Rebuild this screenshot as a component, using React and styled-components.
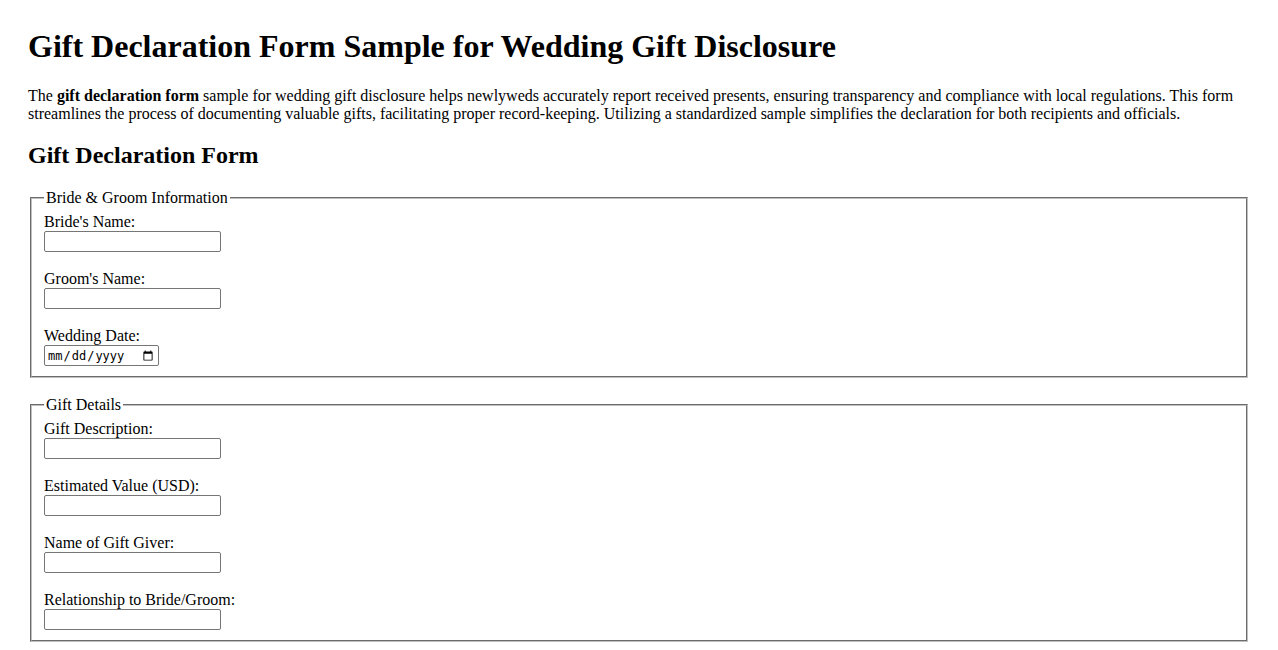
import React from "react";
import styled, { createGlobalStyle } from "styled-components";

const GlobalStyle = createGlobalStyle`
  html, body {
    margin: 0;
    padding: 0;
    background: #ffffff;
  }
  body {
    font-family: "Liberation Serif", "Times New Roman", serif;
    font-size: 16px;
    color: #000000;
  }
`;

const Page = styled.main`
  padding: 28px;
`;

const Title = styled.h1`
  font-size: 32px;
  font-weight: bold;
  line-height: 37px;
  margin: 0 0 21px;
`;

const Intro = styled.p`
  margin: 0 0 16px;
  padding-top: 1px;
  line-height: 18px;
`;

const SectionTitle = styled.h2`
  font-size: 24px;
  font-weight: bold;
  line-height: 27px;
  margin: 19px 0 19px;
`;

const Form = styled.form`
  display: flex;
  flex-direction: column;
  gap: 17px;
`;

const Fieldset = styled.fieldset`
  margin: 0 2px;
  padding: 5px 12px 10px;
  border: 2px groove rgb(192, 192, 192);
  min-width: min-content;
  display: flex;
  flex-direction: column;
  gap: 17px;
`;

const Legend = styled.legend`
  padding: 1px 2px 0;
  line-height: 18px;
  font-size: 16px;
`;

const Field = styled.div`
  display: flex;
  flex-direction: column;
  align-items: flex-start;
`;

const Label = styled.label`
  line-height: 18px;
  font-size: 16px;
  padding-top: 1px;
`;

const Input = styled.input`
  box-sizing: border-box;
  width: ${(p) => (p.type === "date" ? "115px" : "177px")};
  height: 21px;
  margin: 0;
  padding: 1px 2px;
  border: 1px solid #767676;
  border-radius: 2px;
  background: #ffffff;
  font-family: ${(p) =>
    p.type === "date"
      ? `"DejaVu Sans Mono", "Liberation Mono", monospace`
      : `"Liberation Sans", Arial, sans-serif`};
  font-size: ${(p) => (p.type === "date" ? "12px" : "13.33px")};
  color: #000000;
`;

const sections = [
  {
    legend: "Bride & Groom Information",
    fields: [
      { id: "bride", label: "Bride's Name:", type: "text" },
      { id: "groom", label: "Groom's Name:", type: "text" },
      { id: "date", label: "Wedding Date:", type: "date" },
    ],
  },
  {
    legend: "Gift Details",
    fields: [
      { id: "desc", label: "Gift Description:", type: "text" },
      { id: "value", label: "Estimated Value (USD):", type: "text" },
      { id: "giver", label: "Name of Gift Giver:", type: "text" },
      { id: "relation", label: "Relationship to Bride/Groom:", type: "text" },
    ],
  },
];

export default function App() {
  return (
    <>
      <GlobalStyle />
      <Page>
        <Title>Gift Declaration Form Sample for Wedding Gift Disclosure</Title>
        <Intro>
          The <strong>gift declaration form</strong> sample for wedding gift
          disclosure helps newlyweds accurately report received presents,
          ensuring transparency and compliance with local regulations. This
          form streamlines the process of documenting valuable gifts,
          facilitating proper record-keeping. Utilizing a standardized sample
          simplifies the declaration for both recipients and officials.
        </Intro>
        <SectionTitle>Gift Declaration Form</SectionTitle>
        <Form onSubmit={(e) => e.preventDefault()}>
          {sections.map((s) => (
            <Fieldset key={s.legend}>
              <Legend>{s.legend}</Legend>
              {s.fields.map((f) => (
                <Field key={f.id}>
                  <Label htmlFor={f.id}>{f.label}</Label>
                  <Input id={f.id} name={f.id} type={f.type} />
                </Field>
              ))}
            </Fieldset>
          ))}
        </Form>
      </Page>
    </>
  );
}
